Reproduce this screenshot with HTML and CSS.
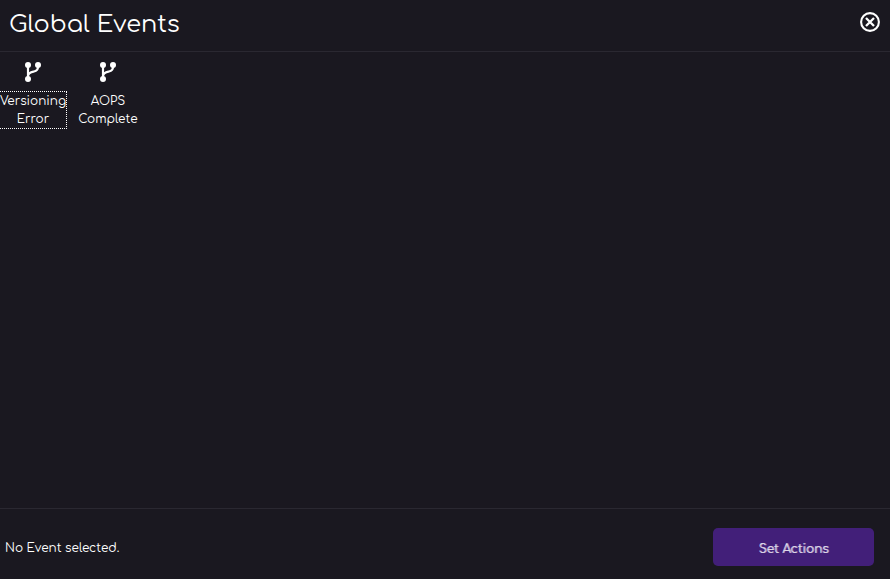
FILE: index.html
```html
<!DOCTYPE html>
<html lang="en">
<head>
<meta charset="utf-8">
<title>Global Events</title>
<link rel="stylesheet" href="styles.css">
</head>
<body>
<header class="header">
  <h1 class="title">Global Events</h1>
  <button class="close" type="button" aria-label="Close">
    <svg viewBox="0 0 20 20" width="20" height="20" fill="none" stroke="currentColor">
      <circle cx="10" cy="10" r="8.9" stroke-width="2.1"/>
      <path d="M6 6l8 8M14 6l-8 8" stroke-width="2.3"/>
    </svg>
  </button>
</header>
<main class="events">
  <button class="event" type="button">
    <svg class="branch" viewBox="0 0 16 20" width="16" height="20" fill="none" stroke="currentColor">
      <path d="M3 3v14M13 3.5v1.5c0 3-2 4-4 4.500S3.500 10.500 3 14" stroke-width="2.2"/>
      <g fill="currentColor" stroke="none"><circle cx="3" cy="3" r="3"/><circle cx="13" cy="3" r="3"/><circle cx="3" cy="17" r="3"/></g>
    </svg>
    <span class="label focused">Versioning Error</span>
  </button>
  <button class="event" type="button">
    <svg class="branch" viewBox="0 0 16 20" width="16" height="20" fill="none" stroke="currentColor">
      <path d="M3 3v14M13 3.5v1.5c0 3-2 4-4 4.500S3.500 10.500 3 14" stroke-width="2.2"/>
      <g fill="currentColor" stroke="none"><circle cx="3" cy="3" r="3"/><circle cx="13" cy="3" r="3"/><circle cx="3" cy="17" r="3"/></g>
    </svg>
    <span class="label">AOPS Complete</span>
  </button>
</main>
<footer class="footer">
  <p class="status">No Event selected.</p>
  <button class="action" type="button">Set Actions</button>
</footer>
</body>
</html>
```
FILE: styles.css
```css
* { box-sizing: border-box; }
body {
  margin: 0;
  min-height: 100vh;
  display: flex;
  flex-direction: column;
  background: #1a1820;
  color: #fff;
  font: 12px/18px Comfortaa, Lato, sans-serif;
}
button {
  border: 0;
  padding: 0;
  background: none;
  color: inherit;
  font: inherit;
  cursor: pointer;
}
svg { display: block; }
.header {
  display: flex;
  align-items: center;
  justify-content: space-between;
  padding: 7px 10px 8px 9px;
  border-bottom: 1px solid #2a2831;
}
.title {
  margin: 0;
  font-size: 24px;
  font-weight: 400;
  line-height: 36px;
}
.close { margin-bottom: 6px; }
.events {
  flex: 1;
  display: flex;
  align-items: flex-start;
  gap: 9px;
  padding-top: 10px;
}
.event {
  width: 66px;
  display: flex;
  flex-direction: column;
  align-items: center;
  gap: 10px;
}
.label { width: 100%; }
.focused { outline: 1px dotted #fff; }
.footer {
  display: flex;
  align-items: center;
  justify-content: space-between;
  padding: 19px 16px 13px 5px;
  border-top: 1px solid #2a2831;
}
.status {
  margin: 0;
  padding-top: 2px;
}
.action {
  width: 161px;
  height: 38px;
  padding-top: 4px;
  border-radius: 5px;
  background: #421f79;
  color: #dcd5e6;
  text-shadow: 1px 0 0 #b9a9cf;
}
```
